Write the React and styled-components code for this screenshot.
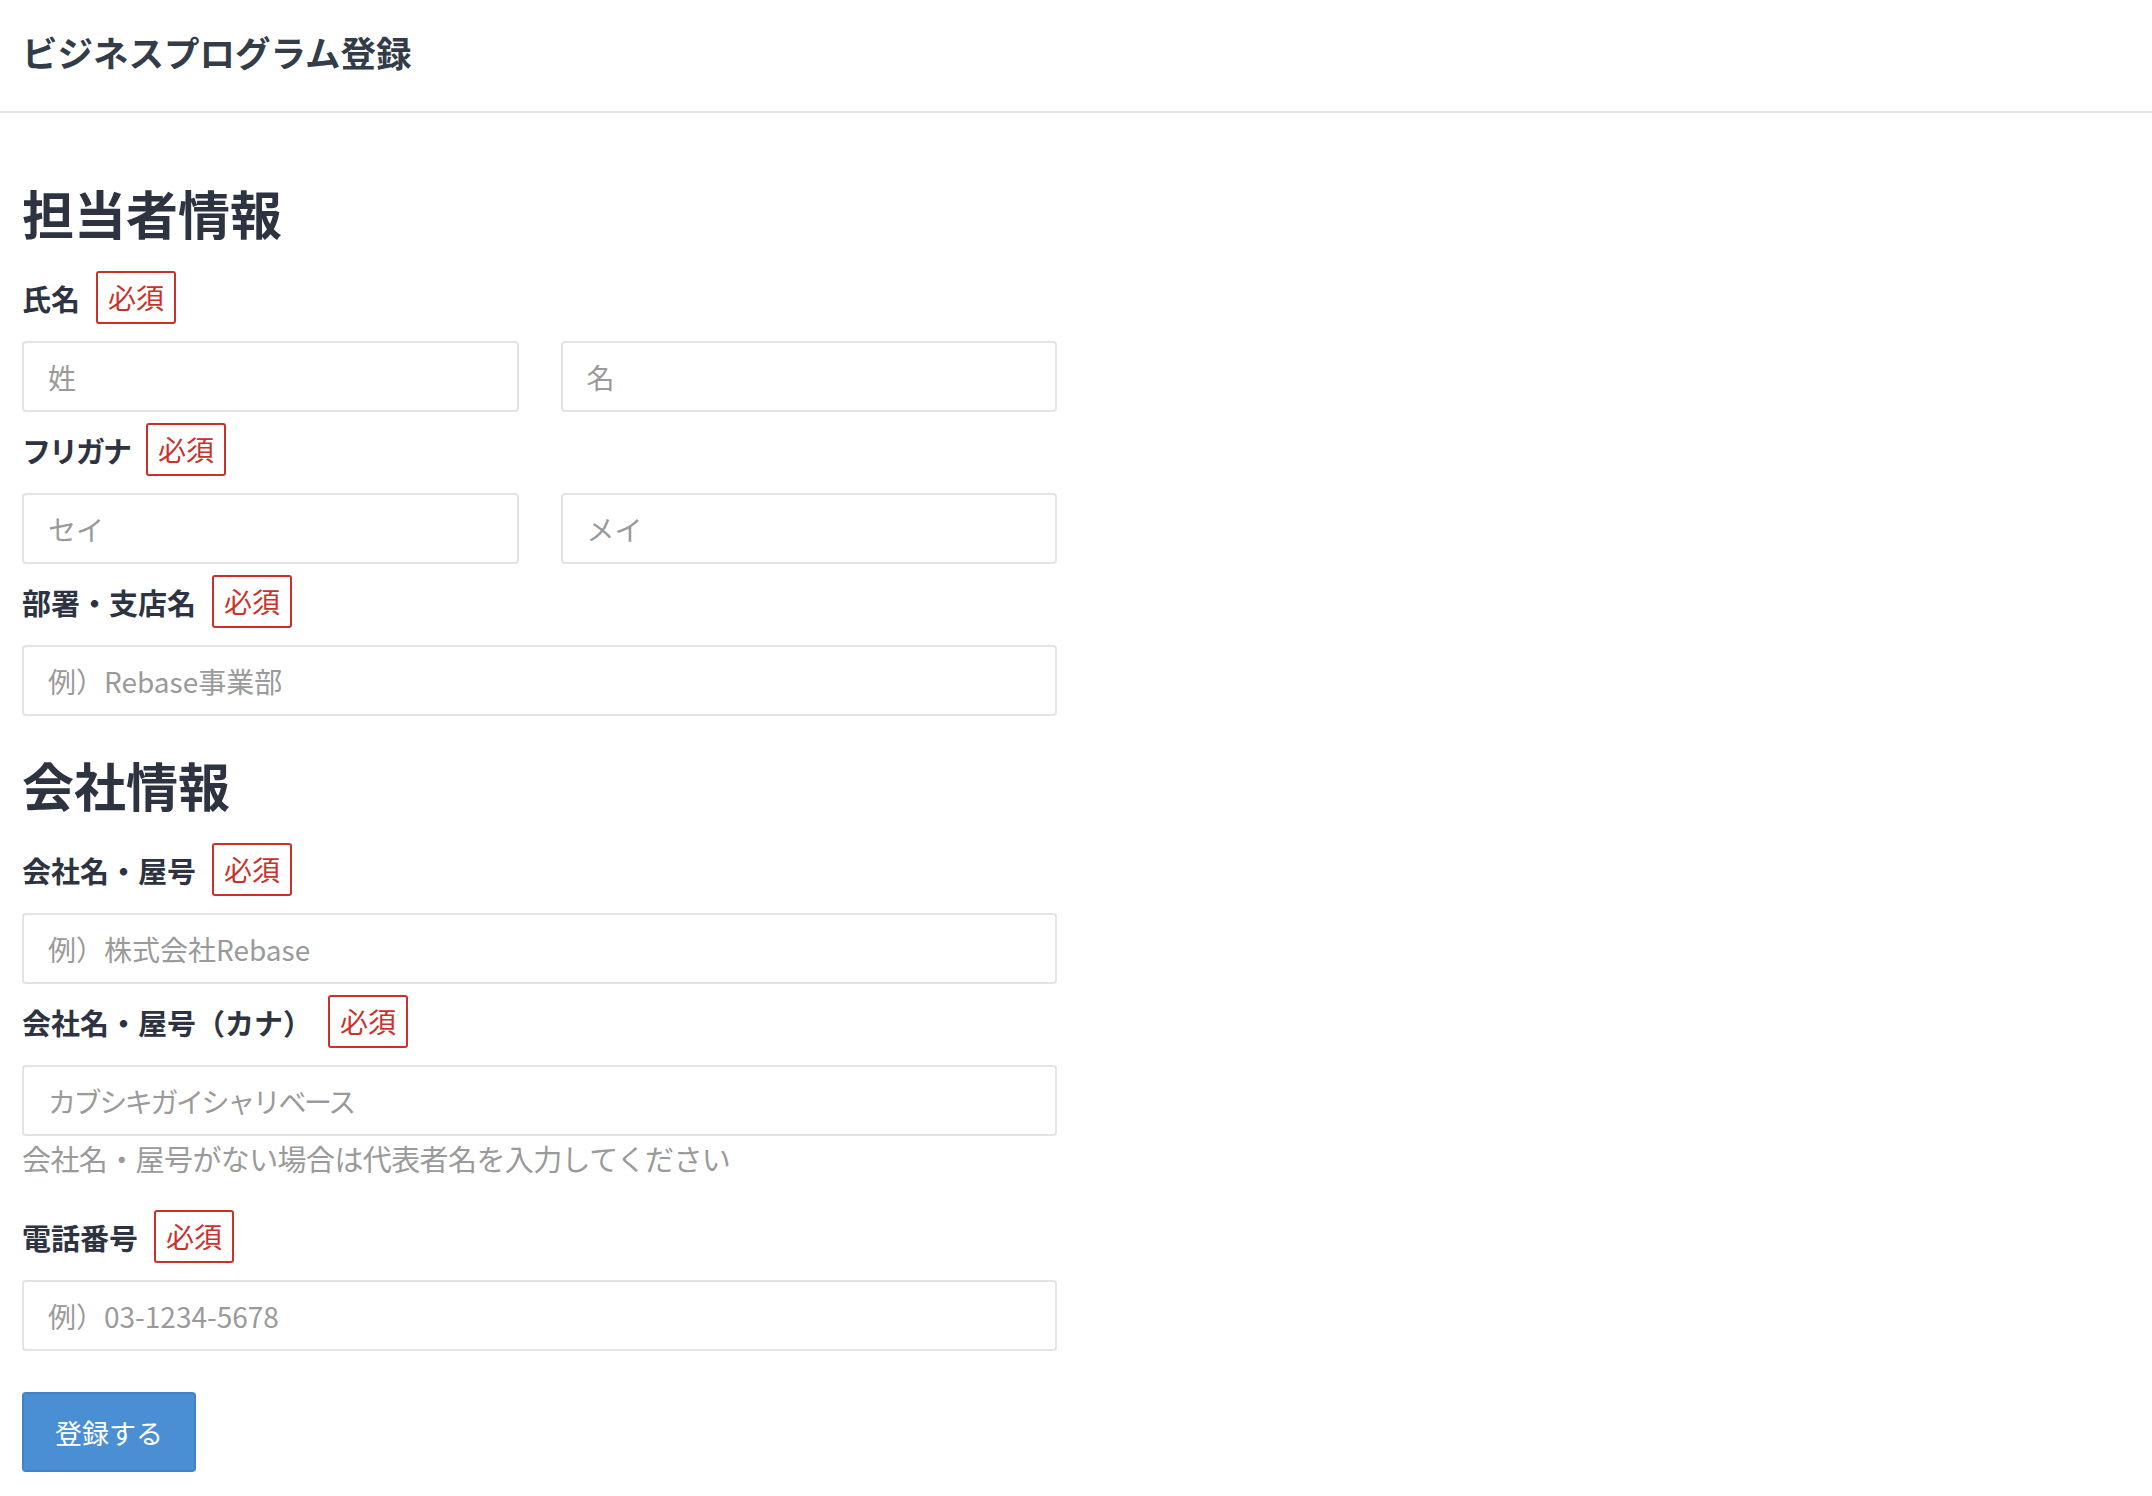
import React from "react";
import styled, { createGlobalStyle } from "styled-components";

const GlobalStyle = createGlobalStyle`
  body {
    margin: 0;
    background: #fff;
    font-family: "Noto Sans CJK JP", "Noto Sans", sans-serif;
    color: #2d3340;
  }
  * {
    box-sizing: border-box;
  }
`;

const Header = styled.header`
  height: 113px;
  display: flex;
  align-items: center;
  padding: 0 22px 8px;
  border-bottom: 2px solid #e6e6e6;
`;

const PageTitle = styled.h1`
  margin: 0;
  font-size: 35.5px;
  font-weight: 700;
  color: #333c49;
`;

const Main = styled.main`
  padding: 69px 22px 40px;
`;

const Form = styled.form`
  width: 1035px;
  display: flex;
  flex-direction: column;
`;

const SectionTitle = styled.h2`
  margin: ${(p) => (p.first ? "0" : "27px")} 0 27px;
  font-size: 52px;
  line-height: 62px;
  font-weight: 700;
  color: #2d3340;
`;

const Field = styled.div`
  display: flex;
  flex-direction: column;
  margin-bottom: ${(p) => (p.hint ? "30px" : "11px")};
`;

const LabelRow = styled.div`
  display: flex;
  align-items: center;
  gap: 16px;
  height: 53px;
  margin-bottom: 17px;
`;

const Label = styled.label`
  font-size: 29px;
  font-weight: 700;
  color: #2d3340;
`;

const Kana = styled.span`
  letter-spacing: -2px;
`;

const Required = styled.span`
  display: inline-block;
  border: 2px solid #c9322b;
  border-radius: 3px;
  padding: 0 10px;
  font-size: 28px;
  line-height: 49px;
  color: #c9322b;
`;

const InputRow = styled.div`
  display: grid;
  grid-template-columns: ${(p) => (p.split ? "1fr 1fr" : "1fr")};
  gap: 42px;
`;

const Input = styled.input`
  height: 71px;
  width: 100%;
  border: 2px solid #e3e3e3;
  border-radius: 4px;
  padding: 0 24px;
  font-family: inherit;
  font-size: 28px;
  color: #333;
  outline: none;

  &::placeholder {
    color: #9a9a9a;
    letter-spacing: ${(p) => (p.narrow ? "-2.4px" : "0")};
  }
`;

const Hint = styled.p`
  margin: 0;
  font-size: 29px;
  line-height: 44px;
  letter-spacing: -0.6px;
  color: #9a9a9a;
`;

const SubmitButton = styled.button`
  margin-top: 30px;
  width: 174px;
  height: 80px;
  border: 2px solid #4183c6;
  border-radius: 4px;
  background: #4a8fd3;
  color: #fff;
  font-family: inherit;
  font-size: 27px;
  cursor: pointer;
`;

const FormField = ({ label, hint, children }) => (
  <Field hint={hint}>
    <LabelRow>
      <Label>{label}</Label>
      <Required>必須</Required>
    </LabelRow>
    {children}
    {hint && <Hint>{hint}</Hint>}
  </Field>
);

const App = () => {
  return (
    <>
      <GlobalStyle />
      <Header>
        <PageTitle>ビジネスプログラム登録</PageTitle>
      </Header>
      <Main>
        <Form onSubmit={(e) => e.preventDefault()}>
          <SectionTitle first>担当者情報</SectionTitle>

          <FormField label="氏名">
            <InputRow split>
              <Input placeholder="姓" />
              <Input placeholder="名" />
            </InputRow>
          </FormField>

          <FormField label={<Kana>フリガナ</Kana>}>
            <InputRow split>
              <Input placeholder="セイ" />
              <Input placeholder="メイ" />
            </InputRow>
          </FormField>

          <FormField label="部署・支店名">
            <InputRow>
              <Input placeholder="例）Rebase事業部" />
            </InputRow>
          </FormField>

          <SectionTitle>会社情報</SectionTitle>

          <FormField label="会社名・屋号">
            <InputRow>
              <Input placeholder="例）株式会社Rebase" />
            </InputRow>
          </FormField>

          <FormField
            label="会社名・屋号（カナ）"
            hint="会社名・屋号がない場合は代表者名を入力してください"
          >
            <InputRow>
              <Input narrow placeholder="カブシキガイシャリベース" />
            </InputRow>
          </FormField>

          <FormField label="電話番号">
            <InputRow>
              <Input placeholder="例）03-1234-5678" />
            </InputRow>
          </FormField>

          <div>
            <SubmitButton type="submit">登録する</SubmitButton>
          </div>
        </Form>
      </Main>
    </>
  );
};

export default App;
